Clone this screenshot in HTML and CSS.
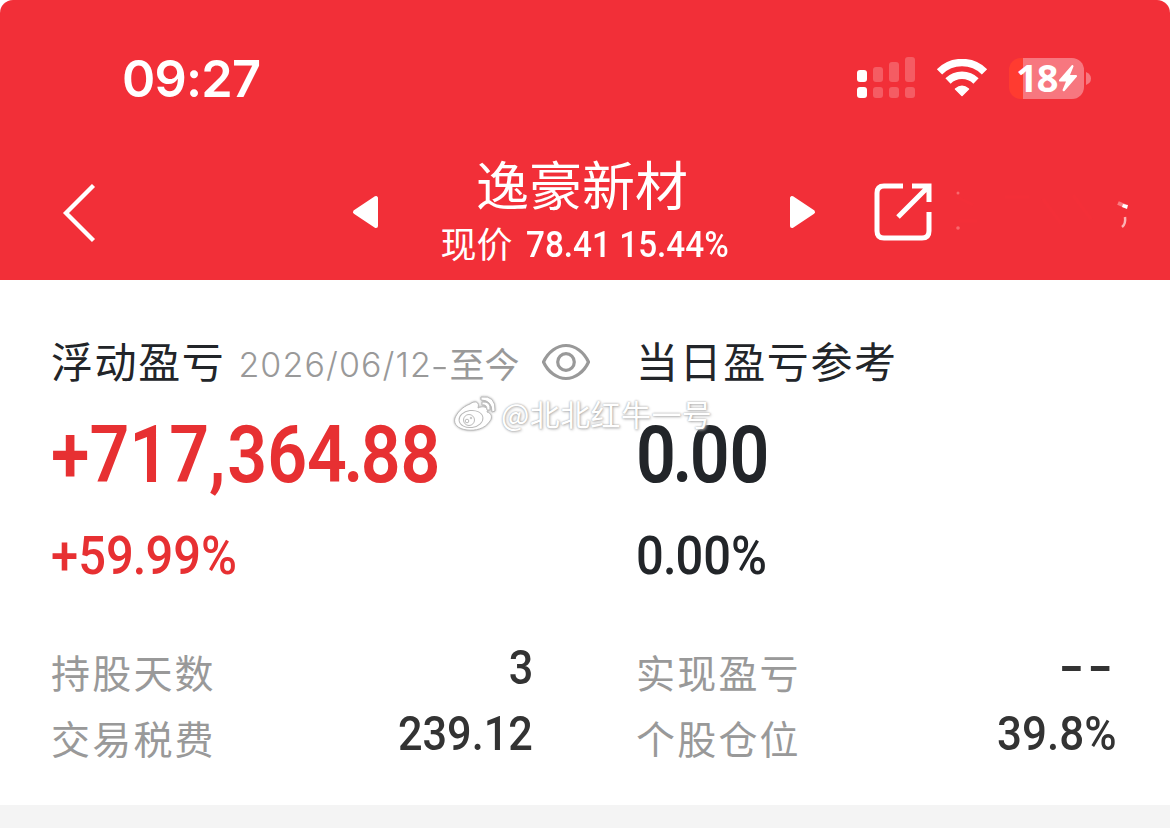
FILE: index.html
```html
<!DOCTYPE html>
<html lang="zh-CN">
<head>
<meta charset="utf-8">
<title>逸豪新材</title>
<link rel="stylesheet" href="styles.css">
</head>
<body>
<header class="header">
  <div class="status">
    <span class="clock">09:27</span>
    <div class="status-icons">
      <svg class="signal" width="60" height="42" viewBox="0 0 60 42" fill="#fff">
        <rect x="1" y="13" width="10" height="12" rx="3"/>
        <rect x="1" y="30" width="10" height="11" rx="3"/>
        <g fill-opacity=".22">
          <rect x="17" y="10" width="10" height="15" rx="3"/>
          <rect x="33" y="5" width="10" height="20" rx="3"/>
          <rect x="49" y="0" width="10" height="25" rx="3"/>
          <rect x="17" y="30" width="10" height="11" rx="3"/>
          <rect x="33" y="30" width="10" height="11" rx="3"/>
          <rect x="49" y="30" width="10" height="11" rx="3"/>
        </g>
      </svg>
      <svg class="wifi" width="52" height="38" viewBox="0 0 52 38" fill="#fff" stroke="#fff" stroke-linejoin="round">
        <path d="M3.500 12.800 A32 32 0 0 1 48.500 12.800" fill="none" stroke-width="7.500"/>
        <path d="M12 22 A20 20 0 0 1 40 22" fill="none" stroke-width="7.500"/>
        <path d="M26 36.500 L19.500 30 Q26 24.500 32.500 30 Z" stroke-width="1.500"/>
      </svg>
      <div class="battery">
        <span class="level">18</span>
        <svg class="bolt" width="20" height="29" viewBox="0 0 20 29" fill="#fff"><path d="M14 1 L1 16 Q.5 17.500 2 17.500 L8 17.500 L4.500 26 Q5 28 6.500 27 L19 12.500 Q19.500 11 18 11 L12 11 L15.500 2.500 Q15.500 .5 14 1Z"/></svg>
      </div>
      <svg class="nub" width="5" height="13" viewBox="0 0 5 13" fill="#f7777f"><path d="M0 0 Q5 2 5 6.500 T0 13Z"/></svg>
    </div>
  </div>
  <nav class="nav">
    <svg class="back" width="34" height="58" viewBox="0 0 34 58" fill="none" stroke="#fff" stroke-width="4.300"><path d="M31.500 1.500 L4 29 L31.500 56.500"/></svg>
    <svg class="prev" width="27" height="34" viewBox="0 0 27 34" fill="#fff" stroke="#fff" stroke-width="4" stroke-linejoin="round"><path d="M24 3 V31 L3 17Z"/></svg>
    <div class="stock">
      <h1 class="name">逸豪新材</h1>
      <div class="quote"><span class="quote-label">现价</span><span class="quote-num">78.41 15.44%</span></div>
    </div>
    <svg class="next" width="27" height="34" viewBox="0 0 27 34" fill="#fff" stroke="#fff" stroke-width="4" stroke-linejoin="round"><path d="M3 3 V31 L24 17Z"/></svg>
    <svg class="share" width="60" height="60" viewBox="0 0 60 60" fill="none" stroke="#fff" stroke-width="5"><path d="M30 4 H11 Q4 4 4 11 V49 Q4 56 11 56 H49 Q56 56 56 49 V30"/><path d="M39 4 H56 V20 M56 4 L25 35"/></svg>
    <svg class="trace" width="180" height="50" viewBox="0 0 180 50"><g fill="#ff8e91" opacity=".6"><circle cx="4" cy="9" r="1.500"/><circle cx="4" cy="44" r="1.800"/></g><path d="M3 13 L19 21 M5 37 H23 M51 13 H75 M89 15 L107 39 M119 11 L137 35" stroke="#f63039" stroke-width="3" opacity=".5"/><path d="M164 19 L171 22" stroke="#f87b80" stroke-width="4"/><path d="M169 20 L174 21 L173 25 L168 23Z" fill="#fff"/><path d="M171 33 Q172 40 168 43" stroke="#fcb2b4" stroke-width="2.500" fill="none"/></svg>
  </nav>
</header>
<main class="card">
  <section class="col col-left">
    <div class="heading">
      <h2 class="title">浮动盈亏</h2>
      <span class="range"><span class="date">2026/06/12</span><span class="dash">-</span><span class="until">至今</span></span>
      <svg class="eye" width="50" height="38" viewBox="0 0 50 38" fill="none" stroke="#999" stroke-width="3.200"><path d="M2.500 19 C7 9 16 2.500 25 2.500 S43 9 47.500 19 C43 29 34 35.500 25 35.500 S7 29 2.500 19Z" stroke-linejoin="round"/><circle cx="25" cy="19" r="8.300"/></svg>
    </div>
    <div class="amount up">+717<span class="comma">,</span>364<span class="dot">.</span>88</div>
    <div class="percent up">+59<span class="dot">.</span>99%</div>
    <dl class="facts">
      <div class="fact"><dt>持股天数</dt><dd>3</dd></div>
      <div class="fact"><dt>交易税费</dt><dd>239.12</dd></div>
    </dl>
  </section>
  <section class="col col-right">
    <div class="heading"><h2 class="title">当日盈亏参考</h2></div>
    <div class="amount">0<span class="dot">.</span>00</div>
    <div class="percent">0<span class="dot">.</span>00%</div>
    <dl class="facts">
      <div class="fact"><dt>实现盈亏</dt><dd class="none">--</dd></div>
      <div class="fact"><dt>个股仓位</dt><dd class="share-pct">39.8%</dd></div>
    </dl>
  </section>
  <div class="watermark">
    <svg width="44" height="38" viewBox="0 0 44 38" fill="#fff" stroke="#bbb" stroke-width="1"><path d="M17 9 C22 5 27 7 25 13 C31 10 36 13 34 17 C38 18 40 22 37 26 C32 34 22 36 14 35 C5 34 0 29 2 23 C4 18 9 12 17 9Z"/><ellipse cx="18" cy="24" rx="12" ry="8.500" transform="rotate(-8 18 24)"/><circle cx="16" cy="25" r="5.500"/><circle cx="14" cy="26" r="1.800"/><circle cx="18" cy="23" r=".8"/><path d="M29 7 Q38 6 37 15 L34 15 Q34 9 29 10Z M28 2 Q43 0 42 16 L39 17 Q39 5 28 5Z"/></svg>
    <span class="handle">@北北红牛一号</span>
  </div>
</main>
<footer class="strip"></footer>
</body>
</html>
```
FILE: styles.css
```css
* { box-sizing: border-box; margin: 0; padding: 0; }
body {
  width: 1170px; height: 828px; overflow: hidden; background: #fff; color: #222529;
  font-family: "Noto Sans CJK SC", sans-serif;
  display: flex; flex-direction: column;
}
svg { display: block; flex: none; }
.header { height: 280px; background: #f22f38; border-radius: 13px 13px 0 0; color: #fff; flex: none; }
.status { height: 156px; padding: 0 79px 0 122px; display: flex; justify-content: space-between; align-items: center; }
.clock { font: 600 50.5px/60px Inter, sans-serif; letter-spacing: -.8px; padding-top: 1px; }
.status-icons { display: flex; align-items: center; }
.wifi { margin-left: 20px; }
.battery {
  margin-left: 21px; width: 75px; height: 41px; border-radius: 12px; padding-left: 7px;
  background: linear-gradient(90deg, #ff3b30 14px, #f7777f 14px);
  display: flex; align-items: center;
}
.level { font: 700 38px/41px "Noto Sans", sans-serif; letter-spacing: -1px; width: 42px; margin-top: -1px; }
.nub { margin-left: 2px; }
.nav { height: 124px; display: flex; align-items: flex-start; padding-left: 62px; }
.back { margin-top: 28px; }
.prev { margin: 39px 0 0 256px; }
.stock { width: 410px; display: flex; flex-direction: column; align-items: center; flex: none; }
.name { font-size: 53px; font-weight: 400; line-height: 60px; margin: -3px 4px 0 0; }
.quote { display: flex; align-items: center; height: 60px; }
.quote-label { font-size: 36px; line-height: 60px; font-weight: 400; margin-right: 13px; margin-top: -3px; }
.quote-num { font: 500 36px/60px Roboto, sans-serif; white-space: nowrap; width: 202px; transform-origin: 0 50%; transform: scaleX(.925); margin-top: 4px; }
.next { margin-top: 39px; }
.share { margin: 26px 0 0 57px; }
.trace { margin: 28px 0 0 21px; }

.card { position: relative; height: 525px; flex: none; display: flex; padding: 52px 0 0 51px; }
.col-left { width: 585px; }
.col-right { width: 534px; }
.heading { height: 60px; display: flex; align-items: center; }
.title { font-size: 42px; font-weight: 400; letter-spacing: 1.6px; line-height: 60px; margin-top: -4px; white-space: nowrap; }
.range { display: flex; align-items: center; color: #999; margin-left: 13px; line-height: 60px; height: 60px; padding-top: 5px; }
.date { font: 300 34px/60px Inter, sans-serif; letter-spacing: 1.1px; width: 192px; }
.dash { font: 300 35px/60px Inter, sans-serif; width: 19px; text-align: center; transform: scaleX(1.15); margin-top: 2px; }
.until { font-size: 35px; font-weight: 400; margin-top: -3px; }
.eye { margin-left: 22px; }
.amount { font: 600 80px/90px Roboto, sans-serif; margin-top: 18px; height: 90px; transform-origin: 0 50%; transform: scaleX(.873); white-space: nowrap; }
.amount .dot { margin: 0 -3px 0 -4px; }
.amount .comma { margin-right: 2px; }
.percent { font: 500 54px/60px Roboto, sans-serif; margin-top: 26px; height: 60px; transform-origin: 0 50%; transform: scaleX(.905); white-space: nowrap; }
.percent .dot { margin: 0 -1px; }
.up { color: #e73032; }
.facts { margin-top: 51px; }
.fact { height: 66px; display: flex; justify-content: space-between; }
.col-left .fact { width: 482px; }
.col-right .fact { width: 480px; }
dt { font-size: 39px; line-height: 68px; letter-spacing: 2.2px; color: #999; font-weight: 400; }
dd { font: 500 48px/62px Roboto, sans-serif; color: #333; transform-origin: 100% 50%; transform: scaleX(.9); }
.col-right .share-pct { margin-right: -1px; transform: scaleX(.915); }
.none { font: 600 48px/58px Inter, sans-serif; letter-spacing: 2px; transform: scaleX(1.18); }
.watermark { position: absolute; left: 453px; top: 114px; display: flex; align-items: center; height: 40px; }
.watermark svg { filter: drop-shadow(0 0 1px #aaa); }
.handle { color: #fff; font-size: 30px; line-height: 40px; letter-spacing: .4px; margin: -3px 0 0 4px; white-space: nowrap; text-shadow: 0 0 2px #999, 1px 1px 3px #bbb; }
.strip { flex: 1; background: #f4f4f4; }
```
